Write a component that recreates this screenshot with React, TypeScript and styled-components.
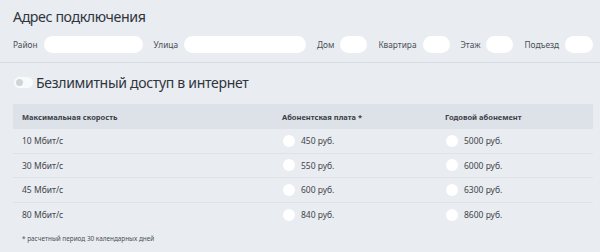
import React from 'react';
import styled, { createGlobalStyle } from 'styled-components';

const GlobalStyle = createGlobalStyle`
  html, body {
    margin: 0;
    padding: 0;
    background: #e9ecf0;
  }
  body {
    font-family: 'Noto Sans', 'Open Sans', sans-serif;
    color: #333a42;
  }
`;

// Data
const ADDRESS_FIELDS = [
  { label: 'Район', width: 99 },
  { label: 'Улица', width: 122 },
  { label: 'Дом', width: 27 },
  { label: 'Квартира', width: 27 },
  { label: 'Этаж', width: 27 },
  { label: 'Подъезд', width: 28 },
];

const TARIFFS = [
  { speed: '10 Мбит/с', monthly: '450 руб.', yearly: '5000 руб.' },
  { speed: '30 Мбит/с', monthly: '550 руб.', yearly: '6000 руб.' },
  { speed: '45 Мбит/с', monthly: '600 руб.', yearly: '6300 руб.' },
  { speed: '80 Мбит/с', monthly: '840 руб.', yearly: '8600 руб.' },
];

// Styled components
const Page = styled.div`
  width: 600px;
  height: 252px;
  overflow: hidden;
`;

const AddressSection = styled.section`
  padding: 7px 13px 9px;
  border-bottom: 1px solid #d6dbe1;
`;

const Title = styled.h2`
  margin: 0 0 9px;
  font-size: 14.2px;
  font-weight: 400;
  letter-spacing: -0.4px;
  line-height: 20px;
  color: #2f353c;
`;

const FieldRow = styled.div`
  display: flex;
  align-items: center;
  gap: 11px;
`;

const Field = styled.label`
  display: flex;
  align-items: center;
  gap: 6px;
`;

const FieldLabel = styled.span`
  font-size: 8.3px;
  color: #4a5058;
`;

const Input = styled.input<{ $w: number }>`
  width: ${p => p.$w}px;
  height: 17px;
  box-sizing: border-box;
  border: none;
  border-radius: 9px;
  background: #fff;
  padding: 0 8px;
  outline: none;
`;

const Content = styled.section`
  padding: 0 7px 0 13px;
`;

const ToggleRow = styled.div`
  display: flex;
  align-items: center;
  gap: 3px;
  height: 22px;
  margin: 8px 0 11px 1px;
`;

const Toggle = styled.span`
  position: relative;
  width: 19px;
  height: 11px;
  border-radius: 6px;
  background: #f8f9fb;
  flex-shrink: 0;

  &::after {
    content: '';
    position: absolute;
    left: 2px;
    top: 2px;
    width: 7px;
    height: 7px;
    border-radius: 50%;
    background: #d0d4d9;
  }
`;

const ToggleText = styled.span`
  font-size: 14px;
  letter-spacing: -0.3px;
  color: #2f353c;
`;

const Table = styled.div`
  display: grid;
  grid-template-columns: 269px 163px 1fr;
`;

const HeaderCell = styled.div`
  background: #dde2e8;
  height: 25px;
  display: flex;
  align-items: center;
  font-size: 7.5px;
  font-weight: 700;
  color: #3a4048;
  &:first-child {
    padding-left: 9px;
  }
`;

const Cell = styled.div<{ $last: boolean }>`
  height: 24.5px;
  display: flex;
  align-items: center;
  gap: 6px;
  font-size: 8.5px;
  color: #3f454c;
  box-sizing: border-box;
  border-bottom: ${p => (p.$last ? 'none' : '1px solid #dfe3e8')};
`;

const SpeedCell = styled(Cell)`
  padding-left: 9px;
`;

const Radio = styled.span`
  width: 12px;
  height: 12px;
  border-radius: 50%;
  background: #fff;
  flex-shrink: 0;
  margin-left: 1px;
`;

const Footnote = styled.p`
  margin: 7px 0 0 9px;
  font-size: 6.4px;
  color: #4a5058;
`;

const App: React.FC = () => {
  return (
    <Page>
      <GlobalStyle />
      <AddressSection>
        <Title>Адрес подключения</Title>
        <FieldRow>
          {ADDRESS_FIELDS.map(f => (
            <Field key={f.label}>
              <FieldLabel>{f.label}</FieldLabel>
              <Input $w={f.width} />
            </Field>
          ))}
        </FieldRow>
      </AddressSection>

      <Content>
        <ToggleRow>
          <Toggle />
          <ToggleText>Безлимитный доступ в интернет</ToggleText>
        </ToggleRow>

        <Table>
          <HeaderCell>Максимальная скорость</HeaderCell>
          <HeaderCell>Абонентская плата *</HeaderCell>
          <HeaderCell>Годовой абонемент</HeaderCell>
          {TARIFFS.map((t, i) => {
            const last = i === TARIFFS.length - 1;
            return (
              <React.Fragment key={t.speed}>
                <SpeedCell $last={last}>{t.speed}</SpeedCell>
                <Cell $last={last}>
                  <Radio />
                  {t.monthly}
                </Cell>
                <Cell $last={last}>
                  <Radio />
                  {t.yearly}
                </Cell>
              </React.Fragment>
            );
          })}
        </Table>

        <Footnote>* расчетный период 30 календарных дней</Footnote>
      </Content>
    </Page>
  );
};

export default App;
